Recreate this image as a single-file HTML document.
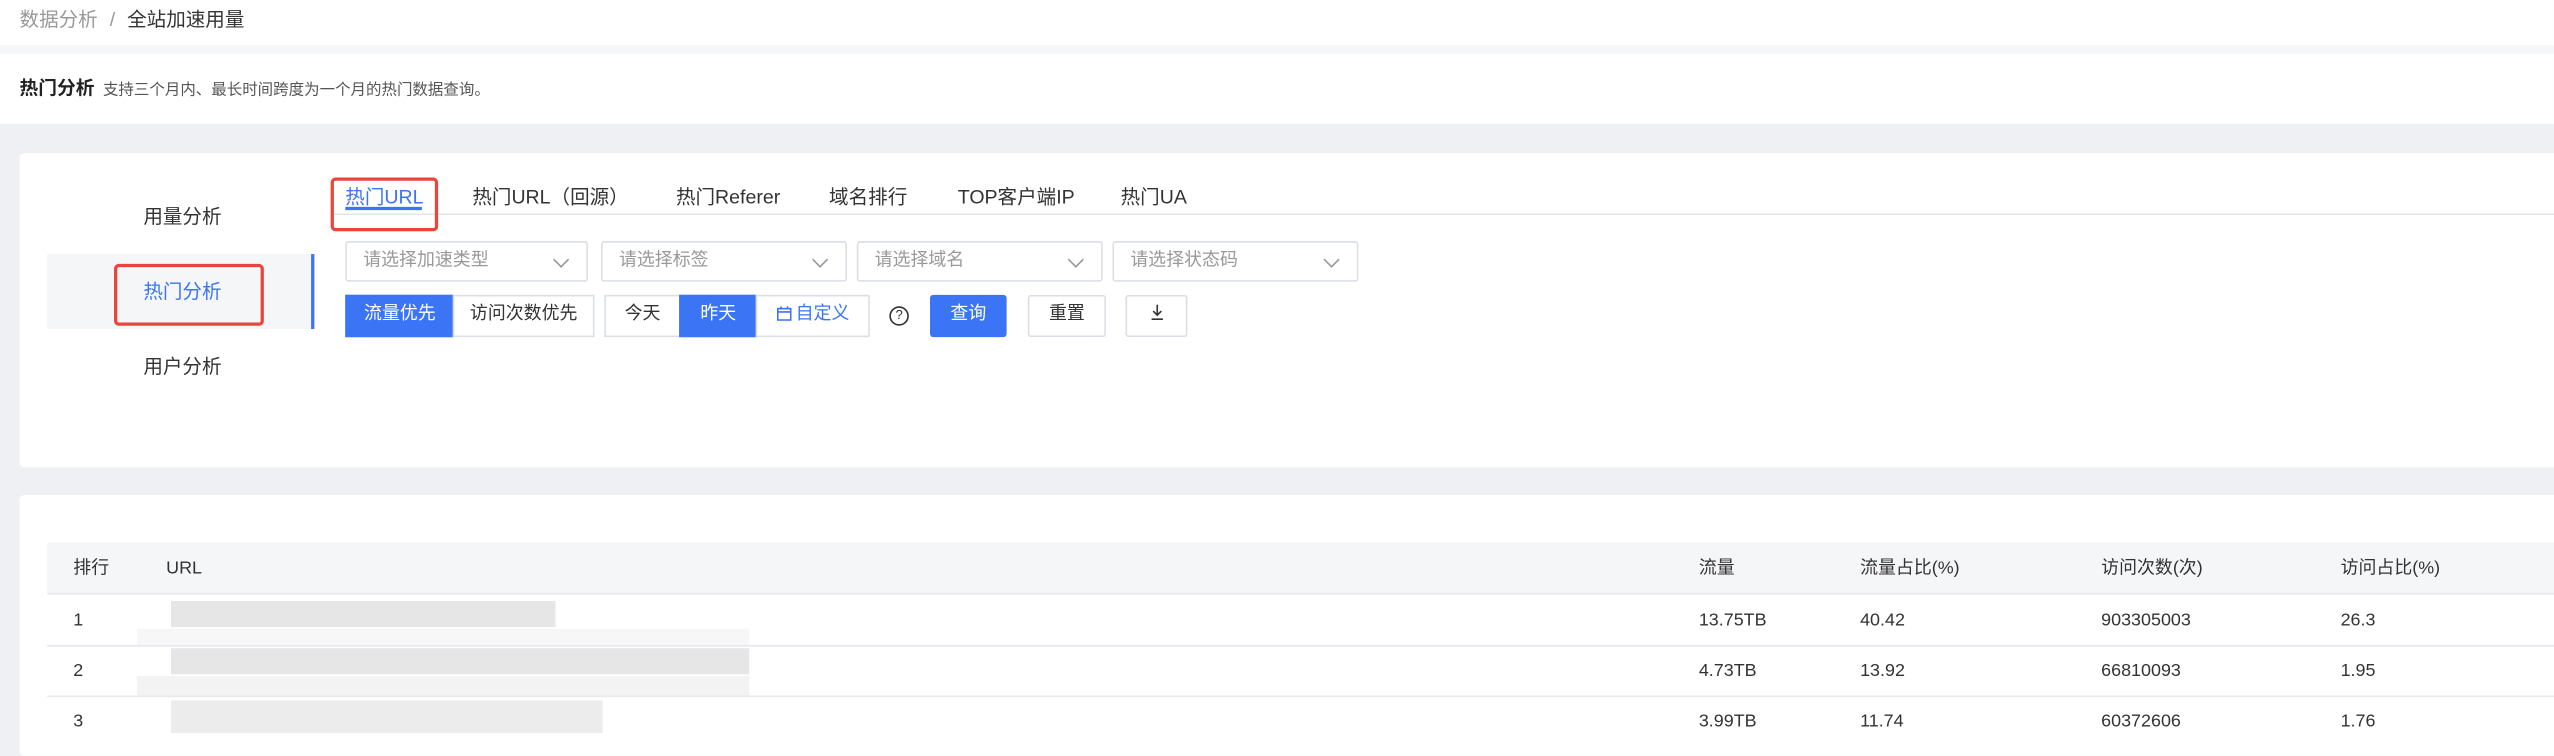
<!DOCTYPE html>
<html><head><meta charset="utf-8"><style>
html,body{margin:0;padding:0;width:2554px;height:740px;overflow:hidden;background:#eef0f3}
#w{position:absolute;left:0;top:0;width:1568px;height:454px;transform:scale(1.6288);transform-origin:0 0;font-family:"Liberation Sans","Noto Sans CJK SC",sans-serif;color:#333;font-size:12px;line-height:14px}
.a{position:absolute;white-space:nowrap}
.sel{position:absolute;top:148px;height:25px;border:1px solid #dcdfe6;border-radius:2px;background:#fff;color:#999;font-size:11px;line-height:23px;box-sizing:border-box;padding-left:10px}
.sel:after{content:"";position:absolute;right:12px;top:7px;width:6px;height:6px;border-right:1px solid #999;border-bottom:1px solid #999;transform:rotate(45deg)}
.b{position:absolute;top:181px;height:26px;border:1px solid #dcdfe6;background:#fff;box-sizing:border-box;line-height:23px;text-align:center;font-size:11px;color:#333}
.bl{background:#3b74f4;color:#fff;border-color:#3b74f4}
.th{position:absolute;top:342px;font-size:11px;color:#333;line-height:14px}
.td{position:absolute;font-size:11px;color:#333;line-height:14px}
.bl2{position:absolute;background:#e6e6e6}
.tab{position:absolute;top:114px;font-size:12px;line-height:14px;white-space:nowrap}
</style></head><body><div id="w">
<div class="a" style="left:0;top:0;width:1568px;height:28px;background:#fff"></div>
<div class="a" style="left:0;top:28px;width:1568px;height:5px;background:#f6f7f9"></div>
<div class="a" style="left:12px;top:5px;font-size:12px;color:#999">数据分析 <span style="margin:0 4px">/</span> <span style="color:#333">全站加速用量</span></div>
<div class="a" style="left:0;top:33px;width:1568px;height:43px;background:#fff"></div>
<div class="a" style="left:12px;top:48px;font-size:11.5px"><b style="color:#222">热门分析</b> <span style="font-size:9.5px;color:#555;margin-left:2px">支持三个月内、最长时间跨度为一个月的热门数据查询。</span></div>

<div class="a" style="left:12px;top:94px;width:1570px;height:193px;background:#fff;border-radius:3px"></div>
<div class="a" style="left:88px;top:126px;font-size:12px">用量分析</div>
<div class="a" style="left:29px;top:156px;width:162px;height:46px;background:#f5f6f8;border-right:2px solid #3b74f4"></div>
<div class="a" style="left:70px;top:162px;width:88px;height:34px;border:2px solid #e8453c;border-radius:3px"></div>
<div class="a" style="left:88px;top:172px;font-size:12px;color:#3b74f4">热门分析</div>
<div class="a" style="left:88px;top:218px;font-size:12px">用户分析</div>

<div class="a" style="left:203px;top:131px;width:1370px;height:1px;background:#e4e6ea"></div>
<div class="a" style="left:212px;top:127px;width:47px;height:2px;background:#3b74f4"></div>
<div class="a" style="left:203px;top:109px;width:62px;height:29px;border:2px solid #e8453c;border-radius:3px"></div>
<div class="tab" style="left:212px;color:#3b74f4">热门URL</div>
<div class="tab" style="left:290px">热门URL（回源）</div>
<div class="tab" style="left:415px">热门Referer</div>
<div class="tab" style="left:509px">域名排行</div>
<div class="tab" style="left:588px">TOP客户端IP</div>
<div class="tab" style="left:688px">热门UA</div>

<div class="sel" style="left:212px;width:149px">请选择加速类型</div>
<div class="sel" style="left:369px;width:151px">请选择标签</div>
<div class="sel" style="left:526px;width:151px">请选择域名</div>
<div class="sel" style="left:683px;width:151px">请选择状态码</div>

<div class="b bl" style="left:212px;width:67px">流量优先</div>
<div class="b" style="left:278px;width:87px">访问次数优先</div>
<div class="b" style="left:371px;width:47px">今天</div>
<div class="b bl" style="left:417px;width:48px">昨天</div>
<div class="b" style="left:464px;width:70px;color:#3b74f4"><svg width="9" height="9" viewBox="0 0 9 9" style="vertical-align:-1px;margin-right:3px"><rect x=".5" y="1.5" width="8" height="7" fill="none" stroke="#3b74f4"/><path d="M.5 3.5h8M2.5 0v2M6.5 0v2" stroke="#3b74f4"/></svg>自定义</div>
<div class="a" style="left:546px;top:188px;width:10px;height:10px;border:1px solid #333;border-radius:50%;font-size:8px;line-height:10px;text-align:center">?</div>
<div class="b bl" style="left:571px;width:47px;border-radius:2px">查询</div>
<div class="b" style="left:631px;width:48px;border-radius:2px">重置</div>
<div class="b" style="left:691px;width:38px;border-radius:2px"><svg width="9" height="10" viewBox="0 0 9 10" style="vertical-align:-1px"><path d="M4.5 0v6M2 4l2.5 2.5L7 4M1 9h7" fill="none" stroke="#333"/></svg></div>

<div class="a" style="left:12px;top:304px;width:1570px;height:160px;background:#fff;border-radius:3px"></div>
<div class="a" style="left:29px;top:333px;width:1545px;height:31px;background:#f5f6f8;border-bottom:1px solid #e4e6ee"></div>
<div class="th" style="left:45px">排行</div><div class="th" style="left:102px">URL</div>
<div class="th" style="left:1043px">流量</div><div class="th" style="left:1142px">流量占比(%)</div>
<div class="th" style="left:1290px">访问次数(次)</div><div class="th" style="left:1437px">访问占比(%)</div>
<div class="a" style="left:29px;top:396px;width:1545px;height:1px;background:#e8e9ef"></div>
<div class="a" style="left:29px;top:427px;width:1545px;height:1px;background:#e8e9ef"></div>
<div class="bl2" style="left:105px;top:369px;width:236px;height:16px"></div>
<div class="bl2" style="left:84px;top:386px;width:376px;height:10px;background:#f7f7f7"></div>
<div class="bl2" style="left:105px;top:398px;width:355px;height:16px"></div>
<div class="bl2" style="left:84px;top:415px;width:376px;height:12px;background:#f3f3f3"></div>
<div class="bl2" style="left:105px;top:430px;width:265px;height:20px;background:#ececec"></div>
<div class="td" style="left:45px;top:374px">1</div><div class="td" style="left:1043px;top:374px">13.75TB</div><div class="td" style="left:1142px;top:374px">40.42</div><div class="td" style="left:1290px;top:374px">903305003</div><div class="td" style="left:1437px;top:374px">26.3</div>
<div class="td" style="left:45px;top:405px">2</div><div class="td" style="left:1043px;top:405px">4.73TB</div><div class="td" style="left:1142px;top:405px">13.92</div><div class="td" style="left:1290px;top:405px">66810093</div><div class="td" style="left:1437px;top:405px">1.95</div>
<div class="td" style="left:45px;top:436px">3</div><div class="td" style="left:1043px;top:436px">3.99TB</div><div class="td" style="left:1142px;top:436px">11.74</div><div class="td" style="left:1290px;top:436px">60372606</div><div class="td" style="left:1437px;top:436px">1.76</div>
</div></body></html>
